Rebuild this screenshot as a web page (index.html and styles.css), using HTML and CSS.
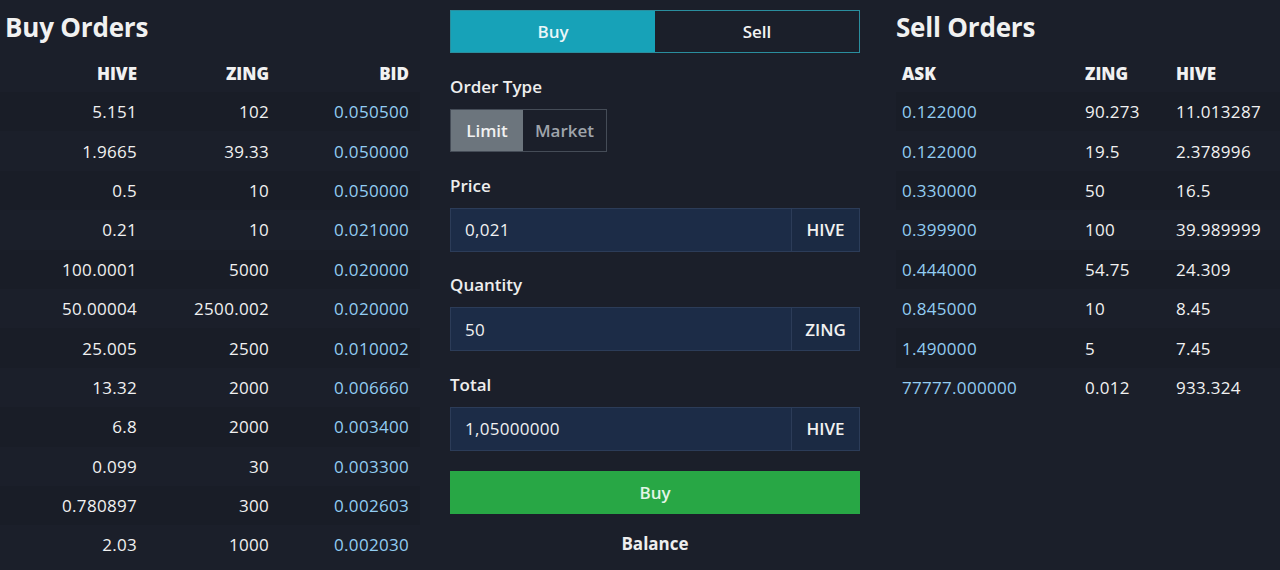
FILE: index.html
```html
<!DOCTYPE html>
<html>
<head>
<meta charset="utf-8">
<link rel="stylesheet" href="styles.css">
</head>
<body>
<div class="page">
  <section class="col-left">
    <h2 class="title">Buy Orders</h2>
    <div class="table buy">
      <div class="row head"><span>HIVE</span><span>ZING</span><span>BID</span></div>
      <div class="row"><span>5.151</span><span>102</span><span class="blue">0.050500</span></div>
      <div class="row"><span>1.9665</span><span>39.33</span><span class="blue">0.050000</span></div>
      <div class="row"><span>0.5</span><span>10</span><span class="blue">0.050000</span></div>
      <div class="row"><span>0.21</span><span>10</span><span class="blue">0.021000</span></div>
      <div class="row"><span>100.0001</span><span>5000</span><span class="blue">0.020000</span></div>
      <div class="row"><span>50.00004</span><span>2500.002</span><span class="blue">0.020000</span></div>
      <div class="row"><span>25.005</span><span>2500</span><span class="blue">0.010002</span></div>
      <div class="row"><span>13.32</span><span>2000</span><span class="blue">0.006660</span></div>
      <div class="row"><span>6.8</span><span>2000</span><span class="blue">0.003400</span></div>
      <div class="row"><span>0.099</span><span>30</span><span class="blue">0.003300</span></div>
      <div class="row"><span>0.780897</span><span>300</span><span class="blue">0.002603</span></div>
      <div class="row"><span>2.03</span><span>1000</span><span class="blue">0.002030</span></div>
    </div>
  </section>

  <section class="col-mid">
    <div class="tabs">
      <div class="tab active">Buy</div>
      <div class="tab">Sell</div>
    </div>
    <div class="label first">Order Type</div>
    <div class="types">
      <div class="type active">Limit</div>
      <div class="type">Market</div>
    </div>
    <div class="label">Price</div>
    <div class="field"><div class="value">0,021</div><div class="addon">HIVE</div></div>
    <div class="label">Quantity</div>
    <div class="field"><div class="value">50</div><div class="addon">ZING</div></div>
    <div class="label">Total</div>
    <div class="field"><div class="value">1,05000000</div><div class="addon">HIVE</div></div>
    <div class="buy-btn">Buy</div>
    <div class="balance">Balance</div>
  </section>

  <section class="col-right">
    <h2 class="title">Sell Orders</h2>
    <div class="table sell">
      <div class="row head"><span>ASK</span><span>ZING</span><span>HIVE</span></div>
      <div class="row"><span class="blue">0.122000</span><span>90.273</span><span>11.013287</span></div>
      <div class="row"><span class="blue">0.122000</span><span>19.5</span><span>2.378996</span></div>
      <div class="row"><span class="blue">0.330000</span><span>50</span><span>16.5</span></div>
      <div class="row"><span class="blue">0.399900</span><span>100</span><span>39.989999</span></div>
      <div class="row"><span class="blue">0.444000</span><span>54.75</span><span>24.309</span></div>
      <div class="row"><span class="blue">0.845000</span><span>10</span><span>8.45</span></div>
      <div class="row"><span class="blue">1.490000</span><span>5</span><span>7.45</span></div>
      <div class="row"><span class="blue">77777.000000</span><span>0.012</span><span>933.324</span></div>
    </div>
  </section>
</div>
</body>
</html>
```

FILE: styles.css
```css
html, body {
  margin: 0;
  padding: 0;
  background: #1b1f2a;
  color: #f1f1f1;
  font-family: "Open Sans", "Noto Sans", "DejaVu Sans", sans-serif;
  height: 570px;
  overflow: hidden;
}

.page {
  display: flex;
  align-items: flex-start;
}

.col-left {
  width: 420px;
  margin-right: 30px;
}

.col-mid {
  width: 410px;
  margin-right: 36px;
  padding-top: 10px;
  display: flex;
  flex-direction: column;
}

.col-right {
  flex: 1;
}

.title {
  margin: 0;
  font-size: 26px;
  font-weight: 700;
  line-height: 54px;
  height: 54px;
  letter-spacing: -0.2px;
}

.col-left .title {
  padding-left: 5px;
}

.table {
  display: flex;
  flex-direction: column;
}

.row {
  display: grid;
  height: 39.4px;
  align-items: center;
  font-size: 17px;
  letter-spacing: 0.3px;
}

.row:nth-child(even) {
  background: #191d27;
}

.row.head {
  font-weight: 800;
  font-size: 17px;
  letter-spacing: 0;
  background: transparent;
  height: 38px;
}

.buy .row {
  grid-template-columns: 137px 132px 140px;
  text-align: right;
}

.sell .row {
  grid-template-columns: 183px 91px 1fr;
  padding-left: 6px;
  text-align: left;
}

.blue {
  color: #92cdf3;
}

.tabs {
  display: flex;
  height: 43px;
  border: 1px solid #2a8e9e;
  box-sizing: border-box;
}

.tab {
  flex: 1;
  display: flex;
  align-items: center;
  justify-content: center;
  font-size: 17px;
  font-weight: 600;
  color: #f4f4f4;
}

.tab.active {
  background: #17a2b8;
  color: #eaf6f8;
}

.label {
  font-size: 17px;
  font-weight: 600;
  line-height: 24px;
  margin-top: 21.5px;
  margin-bottom: 10px;
  color: #eeeeee;
}

.label.first {
  margin-top: 22px;
}

.types {
  display: flex;
  align-self: flex-start;
  border: 1px solid #454c57;
  height: 43px;
  box-sizing: border-box;
}

.type {
  display: flex;
  align-items: center;
  justify-content: center;
  font-size: 17px;
  font-weight: 600;
  color: #9fa4ab;
  width: 83px;
}

.type.active {
  background: #6c757d;
  color: #f1f1f1;
  width: 72px;
}

.field {
  display: flex;
  height: 44px;
  border: 1px solid #2c3c58;
  box-sizing: border-box;
  background: #1c2c47;
}

.value {
  flex: 1;
  display: flex;
  align-items: center;
  padding-left: 14px;
  font-size: 17px;
  font-weight: 500;
  letter-spacing: 0.3px;
}

.addon {
  width: 67px;
  display: flex;
  align-items: center;
  justify-content: center;
  border-left: 1px solid #2c3c58;
  background: #1b2a43;
  font-size: 17px;
  font-weight: 600;
}

.buy-btn {
  margin-top: 20px;
  height: 43px;
  background: #28a745;
  display: flex;
  align-items: center;
  justify-content: center;
  font-size: 17px;
  font-weight: 600;
  color: #e3f5e7;
}

.balance {
  margin-top: 18px;
  text-align: center;
  font-size: 17px;
  font-weight: 700;
  line-height: 24px;
  color: #eeeeee;
}
```
